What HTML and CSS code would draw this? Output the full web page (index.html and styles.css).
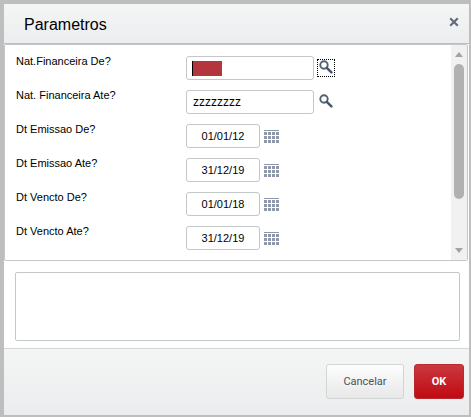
FILE: index.html
```html
<!DOCTYPE html>
<html lang="pt-BR">
<head>
<meta charset="utf-8">
<title>Parametros</title>
<link rel="stylesheet" href="styles.css">
</head>
<body>
<svg class="defs" aria-hidden="true">
  <symbol id="search" viewBox="0 0 14 14">
    <circle cx="5" cy="5" r="3.7" fill="none" stroke="#52606f" stroke-width="1.9"/>
    <path d="M7.8 7.8 12.4 12.4" stroke="#47566a" stroke-width="2.5" stroke-linecap="round"/>
  </symbol>
  <symbol id="calendar" viewBox="0 0 15 13">
    <path fill="#8e98a8" d="M0 0h15v1H0zM0 2h3v3H0zM4 2h3v3H4zM8 2h3v3H8zM12 2h3v3h-3zM0 6h3v3H0zM4 6h3v3H4zM8 6h3v3H8zM12 6h3v3h-3zM0 10h3v3H0zM4 10h3v3H4zM8 10h3v3H8zM12 10h3v3h-3z"/>
  </symbol>
</svg>
<main class="dialog">
  <header class="header">
    <h1 class="title">Parametros</h1>
    <button class="close" type="button" aria-label="Fechar">
      <svg width="10" height="10" viewBox="0 0 10 10"><path d="M1.2 1.2 8.8 8.8M8.8 1.2 1.2 8.8" stroke="#656b7b" stroke-width="2.2"/></svg>
    </button>
  </header>
  <section class="panel">
    <form class="fields">
      <div class="row">
        <label for="nat-de">Nat.Financeira De?</label>
        <input class="text selected" id="nat-de" type="text">
        <button class="pick search focused" type="button" aria-label="Pesquisar"><svg width="14" height="14"><use href="#search"/></svg></button>
      </div>
      <div class="row">
        <label for="nat-ate">Nat. Financeira Ate?</label>
        <input class="text" id="nat-ate" type="text" value="zzzzzzzz">
        <button class="pick search" type="button" aria-label="Pesquisar"><svg width="14" height="14"><use href="#search"/></svg></button>
      </div>
      <div class="row">
        <label for="emi-de">Dt Emissao De?</label>
        <input class="text date" id="emi-de" type="text" value="01/01/12">
        <button class="pick" type="button" aria-label="Calendario"><svg width="15" height="13"><use href="#calendar"/></svg></button>
      </div>
      <div class="row">
        <label for="emi-ate">Dt Emissao Ate?</label>
        <input class="text date" id="emi-ate" type="text" value="31/12/19">
        <button class="pick" type="button" aria-label="Calendario"><svg width="15" height="13"><use href="#calendar"/></svg></button>
      </div>
      <div class="row">
        <label for="ven-de">Dt Vencto De?</label>
        <input class="text date" id="ven-de" type="text" value="01/01/18">
        <button class="pick" type="button" aria-label="Calendario"><svg width="15" height="13"><use href="#calendar"/></svg></button>
      </div>
      <div class="row">
        <label for="ven-ate">Dt Vencto Ate?</label>
        <input class="text date" id="ven-ate" type="text" value="31/12/19">
        <button class="pick" type="button" aria-label="Calendario"><svg width="15" height="13"><use href="#calendar"/></svg></button>
      </div>
    </form>
    <div class="scrollbar" aria-hidden="true">
      <svg width="8" height="5" viewBox="0 0 8 5"><path d="M4 0 8 5H0z" fill="#a3a3a3"/></svg>
      <div class="track"><div class="thumb"></div></div>
      <svg width="8" height="5" viewBox="0 0 8 5"><path d="M0 0H8L4 5z" fill="#a3a3a3"/></svg>
    </div>
  </section>
  <div class="help">
    <textarea class="memo" aria-label="Ajuda" readonly></textarea>
  </div>
  <footer class="footer">
    <button class="btn cancel" type="button">Cancelar</button>
    <button class="btn ok" type="button">OK</button>
  </footer>
</main>
</body>
</html>
```
FILE: styles.css
```css
* { box-sizing: border-box; }

body {
  margin: 0;
  background: #fff;
  color: #000;
  font: 11px/14px "Liberation Sans", Arial, sans-serif;
}

button {
  margin: 0;
  padding: 0;
  border: 0;
  background: none;
  font: inherit;
}

svg { display: block; }

.defs {
  position: absolute;
  width: 0;
  height: 0;
}

.dialog {
  display: flex;
  flex-direction: column;
  min-height: 100vh;
  border: solid #bebebe;
  border-width: 4px 2px 2px 4px;
}

.header {
  display: flex;
  align-items: center;
  justify-content: space-between;
  height: 40px;
  padding: 0 10px 0 20px;
  border-bottom: 1px solid #bebebe;
  background: linear-gradient(#f4f6f5, #ebedef);
}

.title {
  margin: 0;
  padding-top: 2px;
  font-size: 16px;
  font-weight: 400;
  line-height: 20px;
}

.close {
  padding-bottom: 4px;
}

.panel {
  display: flex;
  margin-right: 1px;
  border: 1px solid #c4c6c7;
  border-radius: 2px;
}

.fields {
  display: flex;
  flex: 1;
  flex-direction: column;
  gap: 10px;
  padding: 11px 0 10px 11px;
}

.row {
  display: flex;
  align-items: center;
}

.row label {
  width: 170px;
  height: 24px;
  line-height: 10px;
}

.text {
  width: 128px;
  height: 24px;
  padding: 0 6px;
  border: 1px solid #c2c7c7;
  border-radius: 3px;
  outline: 0;
  background: #fff;
  color: #000;
  font: 12px/14px "Liberation Sans", Arial, sans-serif;
}

.selected {
  background: linear-gradient(90deg, #000 1px, #b4363c 1px) 5px 4px / 30px 15px no-repeat #fff;
}

.date {
  width: 74px;
  font-size: 11px;
  text-align: center;
}

.pick {
  display: flex;
  align-items: center;
  justify-content: center;
  height: 18px;
  margin-left: 4px;
}

.search {
  width: 18px;
  margin-left: 3px;
  padding: 0 2px 2px 1px;
}

.focused {
  outline: 1px dotted #000;
  outline-offset: -1px;
}

.scrollbar {
  display: flex;
  flex-direction: column;
  align-items: center;
  width: 16px;
  padding: 7px 0;
  background: #f1f1f1;
}

.track {
  flex: 1;
  width: 10px;
  padding: 7px 0;
}

.thumb {
  height: 76%;
  border-radius: 5px;
  background: #b1b1b1;
}

.help {
  display: flex;
  padding: 11px 9px 7px 11px;
}

.memo {
  flex: 1;
  height: 69px;
  margin: 0;
  border: 1px solid #c2c7c7;
  border-radius: 2px;
  outline: 0;
  background: #fff;
  resize: none;
}

.footer {
  display: flex;
  flex: 1;
  align-items: flex-start;
  justify-content: flex-end;
  gap: 10px;
  padding: 15px 5px;
  border-top: 1px solid #d3d6d6;
  background: linear-gradient(#f4f6f5, #ebecee);
}

.btn {
  height: 35px;
  border: 1px solid #d3d5d5;
  border-radius: 3px;
  font: 11px/14px Roboto, sans-serif;
}

.cancel {
  width: 78px;
  background: linear-gradient(#fdfdfd, #e8e8e9);
  color: #4b5261;
}

.ok {
  width: 50px;
  border-color: #b92a30;
  background: linear-gradient(#cb383f, #c00a12);
  color: #fff;
  font-weight: 700;
}
```
